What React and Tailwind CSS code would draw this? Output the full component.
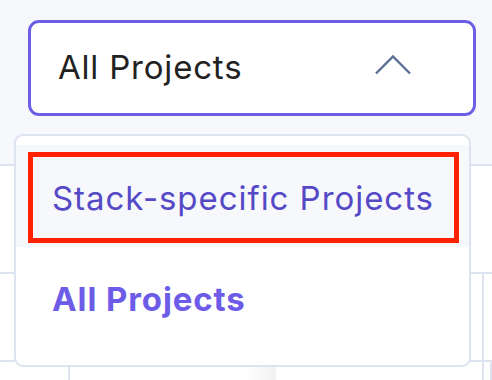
import React from "react";

export default function App() {
  return (
    <div className="relative w-[492px] h-[380px] overflow-hidden bg-white font-['Inter',sans-serif]">
      {/* background table */}
      <div className="flex flex-col">
        <div className="h-[166px] bg-[#f7f8fc] border-b-2 border-[#dde3ef] px-[28px] pt-[20px]">
          <button className="flex w-[448px] h-[96px] items-center justify-between rounded-[11px] border-[3px] border-[#6c5fe6] bg-white pl-[27px] pr-[62px]">
            <span className="text-[33px] leading-none text-[#222222] tracking-[0.8px] mt-[-2px]">All Projects</span>
            <svg width="36" height="20" viewBox="0 0 36 20" fill="none" className="mt-[-7px]">
              <path d="M1 18.5 L18 1.5 L35 18.5" stroke="#5b6f95" strokeWidth="2.4" />
            </svg>
          </button>
        </div>
        <div className="h-[108px] border-b-2 border-[#dde3ef]" />
        <div className="flex h-[88px] border-b-2 border-[#dde3ef]">
          <div className="w-[482px]" />
          <div className="flex-1 border-l-2 border-[#dde3ef]" />
        </div>
        <div className="flex h-[40px]">
          <div className="w-[68px]" />
          <div className="w-[208px] border-l-2 border-[#dde3ef] bg-gradient-to-r from-white from-85% to-[#f1f1f1]" />
          <div className="w-[206px]" />
          <div className="w-[8px] border-l-2 border-[#dde3ef]" />
          <div className="flex-1 border-l-2 border-[#dde3ef]" />
        </div>
      </div>

      {/* dropdown menu */}
      <div className="absolute left-[14px] top-[134px] w-[457px] h-[233px] rounded-[9px] border-2 border-[#dde3ef] bg-white pt-[9px]">
        <div className="bg-[#f7f8fc] pl-[12px] pr-[10px] pt-[7px] pb-[4px]">
          <div className="flex h-[91px] items-center border-[5px] border-[#ff2100] pl-[19px]">
            <span className="text-[33px] leading-none tracking-[0.95px] text-[#5549c6] mt-[1px]">Stack-specific Projects</span>
          </div>
        </div>
        <div className="flex h-[108px] items-center pl-[36px]">
          <span className="text-[33px] leading-none font-bold tracking-[0.9px] text-[#6c5ce7] mt-[-3px]">All Projects</span>
        </div>
      </div>
    </div>
  );
}
